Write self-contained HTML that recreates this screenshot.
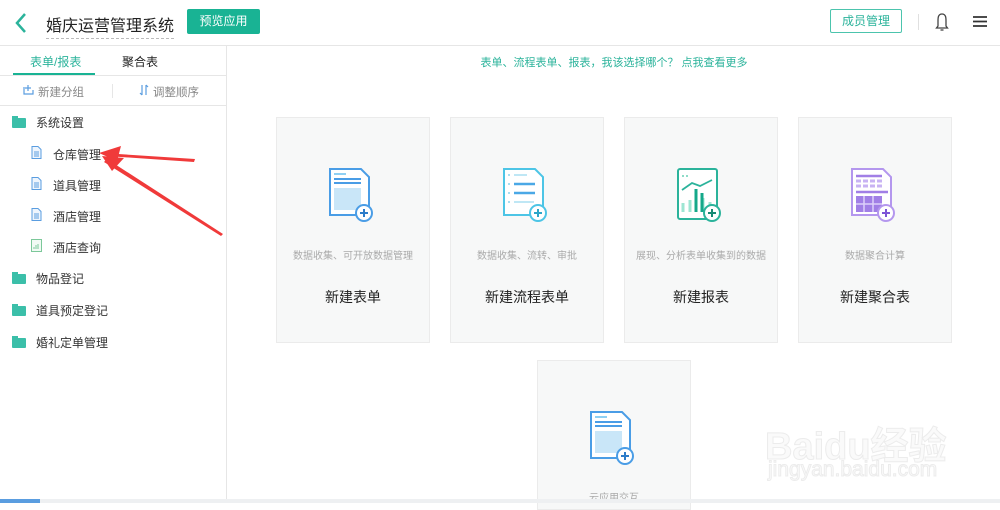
<!DOCTYPE html>
<html><head><meta charset="utf-8"><style>
*{margin:0;padding:0;box-sizing:border-box}
body{width:1000px;height:503px;overflow:hidden;background:#fff;font-family:"Liberation Sans","Noto Sans CJK SC",sans-serif;position:relative;color:#333}
.abs{position:absolute}
.hdr{left:0;top:0;width:1000px;height:46px;border-bottom:1px solid #e6e6e6}
.side{left:0;top:46px;width:227px;height:457px;border-right:1px solid #e6e6e6}
.card{position:absolute;width:154px;height:226px;background:#f7f8f8;border:1px solid #ebebeb}
.card .d{position:absolute;top:129px;width:100%;text-align:center;font-size:10px;color:#aaa}
.card .t{position:absolute;top:169px;width:100%;text-align:center;font-size:14px;color:#222}
.card svg{position:absolute;left:50px;top:50px}
.item{position:absolute;font-size:12px;color:#333}
.fold{position:absolute;left:12px;width:14px;height:10px;background:#3bbfa9;border-radius:1px}
.fold:before{content:"";position:absolute;left:0;top:-2px;width:6px;height:3px;background:#3bbfa9}
</style></head><body>
<div class="abs hdr"></div>
<svg class="abs" style="left:14px;top:12px" width="14" height="22"><path d="M11 2 L3 11 L11 20" stroke="#2bb39b" stroke-width="2.5" fill="none"/></svg>
<div class="abs" style="left:46px;top:12px;font-size:16px;color:#222;border-bottom:1px dashed #bbb;padding-bottom:2px">婚庆运营管理系统</div>
<div class="abs" style="left:187px;top:9px;width:73px;height:25px;background:#19b394;color:#fff;font-size:12px;text-align:center;line-height:25px;border-radius:2px">预览应用</div>
<div class="abs" style="left:830px;top:9px;width:72px;height:24px;border:1px solid #4cc4ad;color:#2bb39b;font-size:12px;text-align:center;line-height:22px;border-radius:2px">成员管理</div>
<div class="abs" style="left:918px;top:14px;width:1px;height:16px;background:#e0e0e0"></div>
<svg class="abs" style="left:934px;top:12px" width="16" height="20"><path d="M8 2 C4 2 4 6 4 9 L4 14 L2.5 16 L13.5 16 L12 14 L12 9 C12 6 12 2 8 2Z" stroke="#444" stroke-width="1.3" fill="none"/><path d="M6.5 18 h3" stroke="#444" stroke-width="1.3"/></svg>
<svg class="abs" style="left:973px;top:15px" width="14" height="13"><path d="M0 2h14M0 6.5h14M0 11h14" stroke="#333" stroke-width="1.8"/></svg>
<div class="abs side"></div>
<div class="abs" style="left:0;top:75px;width:227px;height:1px;background:#e6e6e6"></div>
<div class="abs" style="left:0;top:105px;width:227px;height:1px;background:#e6e6e6"></div>
<div class="abs" style="left:30px;top:53px;font-size:12px;color:#2bb39b">表单/报表</div>
<div class="abs" style="left:13px;top:73px;width:82px;height:2px;background:#19b394"></div>
<div class="abs" style="left:122px;top:53px;font-size:12px;color:#222">聚合表</div>
<svg class="abs" style="left:23px;top:84px" width="11" height="11"><path d="M1 3v7h9V6M5 1v6M2 4h6" stroke="#5a9de0" stroke-width="1.2" fill="none"/></svg>
<div class="abs" style="left:38px;top:84px;font-size:11.5px;color:#888">新建分组</div>
<div class="abs" style="left:112px;top:84px;width:1px;height:14px;background:#e6e6e6"></div>
<svg class="abs" style="left:139px;top:84px" width="10" height="12"><path d="M3 1v10M7 1v10M1 9l2 2M9 3L7 1" stroke="#5a9de0" stroke-width="1.2" fill="none"/></svg>
<div class="abs" style="left:153px;top:84px;font-size:11.5px;color:#888">调整顺序</div>
<div class="fold" style="top:118px"></div><div class="item" style="left:36px;top:114px">系统设置</div>
<svg class="abs" style="left:31px;top:146px" width="11" height="13"><path d="M1 .5h6l3 3v9H1z" stroke="#5a9de0" fill="#eef5fd"/><path d="M3 6h5M3 8h5M3 10h5" stroke="#5a9de0"/></svg>
<div class="item" style="left:53px;top:146px">仓库管理</div>
<svg class="abs" style="left:31px;top:177px" width="11" height="13"><path d="M1 .5h6l3 3v9H1z" stroke="#5a9de0" fill="#eef5fd"/><path d="M3 6h5M3 8h5M3 10h5" stroke="#5a9de0"/></svg>
<div class="item" style="left:53px;top:177px">道具管理</div>
<svg class="abs" style="left:31px;top:208px" width="11" height="13"><path d="M1 .5h6l3 3v9H1z" stroke="#5a9de0" fill="#eef5fd"/><path d="M3 6h5M3 8h5M3 10h5" stroke="#5a9de0"/></svg>
<div class="item" style="left:53px;top:208px">酒店管理</div>
<svg class="abs" style="left:31px;top:239px" width="11" height="13"><path d="M.5 .5h10v12H.5z" stroke="#7cc89a" fill="#f1faf4"/><path d="M3 10V8M5 10V6M7 10V5" stroke="#7cc89a"/></svg>
<div class="item" style="left:53px;top:239px">酒店查询</div>
<div class="fold" style="top:274px"></div><div class="item" style="left:36px;top:270px">物品登记</div>
<div class="fold" style="top:306px"></div><div class="item" style="left:36px;top:302px">道具预定登记</div>
<div class="fold" style="top:338px"></div><div class="item" style="left:36px;top:334px">婚礼定单管理</div>
<svg class="abs" style="left:95px;top:140px" width="135" height="100"><path d="M8 13 L100 19 L99 22 L12 16Z" fill="#f03a3a"/><path d="M4 13 L26 6 L22 21Z" fill="#f03a3a"/><path d="M12 19 L128 94 L126 96 L9 22Z" fill="#f03a3a"/><path d="M7 16 L29 18 L17 31Z" fill="#f03a3a"/></svg>
<div class="abs" style="left:228px;top:54px;width:772px;text-align:center;font-size:11px;color:#2bb39b">表单、流程表单、报表，我该选择哪个？ 点我查看更多</div>
<div class="card" style="left:276px;top:117px">
<svg width="50" height="56" viewBox="0 0 50 56"><path d="M3 1h31l8 8v38H3z" fill="#fff" stroke="#4a9de6" stroke-width="2"/><path d="M7 6h12" stroke="#8fd0f3" stroke-width="2"/><path d="M7 11h27M7 15h27" stroke="#4a9de6" stroke-width="2"/><rect x="7" y="20" width="27" height="22" fill="#c9e6f8"/><circle cx="37" cy="45" r="8" fill="#fff" stroke="#4a9de6" stroke-width="2"/><path d="M33 45h8M37 41v8" stroke="#2c7cc9" stroke-width="2"/></svg>
<div class="d">数据收集、可开放数据管理</div><div class="t">新建表单</div></div>
<div class="card" style="left:450px;top:117px">
<svg width="50" height="56" viewBox="0 0 50 56"><path d="M3 1h31l8 8v38H3z" fill="#fff" stroke="#4dc5e6" stroke-width="2"/><path d="M7 7h2M7 16h2M7 25h2M7 34h2" stroke="#a8def0" stroke-width="2"/><path d="M13 7h13M13 34h20" stroke="#bfe7f5" stroke-width="2"/><path d="M13 16h21M13 25h21" stroke="#4aa8e6" stroke-width="2.5"/><circle cx="37" cy="45" r="8" fill="#fff" stroke="#4dc5e6" stroke-width="2"/><path d="M33 45h8M37 41v8" stroke="#2ba6c9" stroke-width="2"/></svg>
<div class="d">数据收集、流转、审批</div><div class="t">新建流程表单</div></div>
<div class="card" style="left:624px;top:117px">
<svg width="50" height="56" viewBox="0 0 50 56"><rect x="3" y="1" width="39" height="50" rx="2" fill="#fff" stroke="#2bb39b" stroke-width="2"/><path d="M7 8h2M11 8h2" stroke="#8edcc8" stroke-width="2"/><path d="M7 22l10-7 8 3 12-6" stroke="#2bb39b" stroke-width="1.8" fill="none"/><path d="M8 44v-9M15 44v-12M28 44v-14M35 44v-10" stroke="#9de6d3" stroke-width="3"/><path d="M21 44V21M27 44V25" stroke="#14a88a" stroke-width="3"/><circle cx="37" cy="45" r="8" fill="#fff" stroke="#2bb39b" stroke-width="2"/><path d="M33 45h8M37 41v8" stroke="#188a74" stroke-width="2"/></svg>
<div class="d">展现、分析表单收集到的数据</div><div class="t">新建报表</div></div>
<div class="card" style="left:798px;top:117px">
<svg width="50" height="56" viewBox="0 0 50 56"><path d="M3 1h31l8 8v38H3z" fill="#fff" stroke="#b497ee" stroke-width="2"/><path d="M7 8h26" stroke="#a17fe6" stroke-width="2.5"/><path d="M7 13h26M7 18h26" stroke="#c8b3f3" stroke-width="3" stroke-dasharray="5 2"/><path d="M7 24h32" stroke="#a17fe6" stroke-width="2.5"/><rect x="7" y="28" width="26" height="16" fill="#a17fe6"/><path d="M15 28v16M24 28v16M7 36h26" stroke="#ddd0fa" stroke-width="1.5"/><circle cx="37" cy="45" r="8" fill="#fff" stroke="#b497ee" stroke-width="2"/><path d="M33 45h8M37 41v8" stroke="#7d55d6" stroke-width="2"/></svg>
<div class="d">数据聚合计算</div><div class="t">新建聚合表</div></div>
<div class="card" style="left:537px;top:360px;height:150px">
<svg width="50" height="56" viewBox="0 0 50 56"><path d="M3 1h31l8 8v38H3z" fill="#fff" stroke="#4a9de6" stroke-width="2"/><path d="M7 6h12" stroke="#8fd0f3" stroke-width="2"/><path d="M7 11h27M7 15h27" stroke="#4a9de6" stroke-width="2"/><rect x="7" y="20" width="27" height="22" fill="#c9e6f8"/><circle cx="37" cy="45" r="8" fill="#fff" stroke="#4a9de6" stroke-width="2"/><path d="M33 45h8M37 41v8" stroke="#2c7cc9" stroke-width="2"/></svg>
<div class="d" style="top:128px">云应用交互</div></div>
<div class="abs" style="left:765px;top:415px;font-size:38px;color:#fafafa;font-weight:bold;-webkit-text-stroke:1px #ececec">Baidu经验</div>
<div class="abs" style="left:768px;top:458px;font-size:21px;color:#fbfbfb;-webkit-text-stroke:1px #ececec">jingyan.baidu.com</div>
<div class="abs" style="left:0;top:499px;width:1000px;height:4px;background:#eef0f2"></div>
<div class="abs" style="left:0;top:499px;width:40px;height:4px;background:#5a9de0"></div>
</body></html>
